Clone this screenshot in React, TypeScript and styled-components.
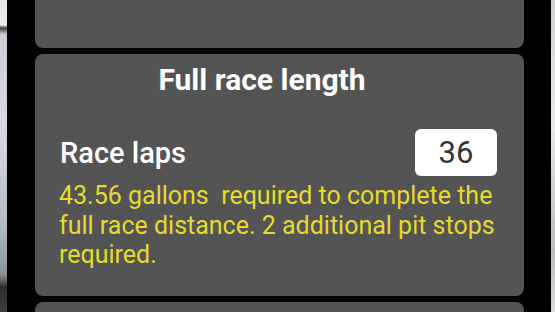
import React, { useState } from 'react';
import styled, { createGlobalStyle } from 'styled-components';

const GlobalStyle = createGlobalStyle`
  html, body {
    margin: 0;
    padding: 0;
    background: #000;
    overflow: hidden;
  }
  body {
    font-family: Roboto, "Noto Sans", sans-serif;
  }
`;

const Screen = styled.div`
  width: 555px;
  height: 312px;
  display: flex;
  overflow: hidden;
  background: #000;
`;

const EdgeLeft = styled.div`
  width: 7px;
  flex-shrink: 0;
  background: linear-gradient(180deg, #dfe3e6 0%, #e8ebed 8%, #3a3d40 9%, #c9cdd1 11%, #d6dade 40%, #b9bec2 70%, #8d9296 88%, #2a2c2e 92%, #3b3e40 100%);
`;

const EdgeRight = styled.div`
  width: 4px;
  margin-left: auto;
  flex-shrink: 0;
  background: linear-gradient(180deg, #cfd2d4 0%, #e6e8e9 40%, #b9bcbe 80%, #d9dcdd 100%);
`;

const Column = styled.div`
  width: 489px;
  margin-left: 28px;
  margin-top: -40px;
  display: flex;
  flex-direction: column;
  gap: 6px;
`;

const Card = styled.section<{ $height?: number }>`
  background: #545454;
  border-radius: 8px;
  box-sizing: border-box;
  height: ${p => (p.$height ? `${p.$height}px` : 'auto')};
  padding: 9px 27px 0 24px;
  flex-shrink: 0;
`;

const Title = styled.h2`
  margin: 0;
  text-align: center;
  color: #fff;
  font-size: 30px;
  font-weight: 700;
  line-height: 34px;
  padding-right: 32px;
`;

const Row = styled.div`
  display: flex;
  align-items: center;
  justify-content: space-between;
  margin-top: 32px;
`;

const Label = styled.span`
  color: #fff;
  font-size: 29px;
  font-weight: 500;
  padding-left: 1px;
`;

const LapInput = styled.input`
  width: 82px;
  height: 47px;
  box-sizing: border-box;
  border: none;
  border-radius: 6px;
  background: #fff;
  color: #333;
  font-family: Roboto, "Noto Sans", sans-serif;
  font-size: 31px;
  text-align: center;
  outline: none;
  padding: 0;
`;

const Note = styled.p`
  margin: 5px -4px 0 0;
  color: #e6da2e;
  font-size: 25px;
  line-height: 29.5px;
  white-space: pre-wrap;
`;

export default function App() {
  const [laps, setLaps] = useState('36');

  return (
    <>
      <GlobalStyle />
      <Screen>
        <EdgeLeft />
        <Column>
          <Card $height={88} />
          <Card $height={242}>
            <Title>Full race length</Title>
            <Row>
              <Label>Race laps</Label>
              <LapInput value={laps} onChange={e => setLaps(e.target.value)} />
            </Row>
            <Note>
              {'43.56 gallons  required to complete the full race distance. 2 additional pit stops required.'}
            </Note>
          </Card>
          <Card $height={120} />
        </Column>
        <EdgeRight />
      </Screen>
    </>
  );
}
